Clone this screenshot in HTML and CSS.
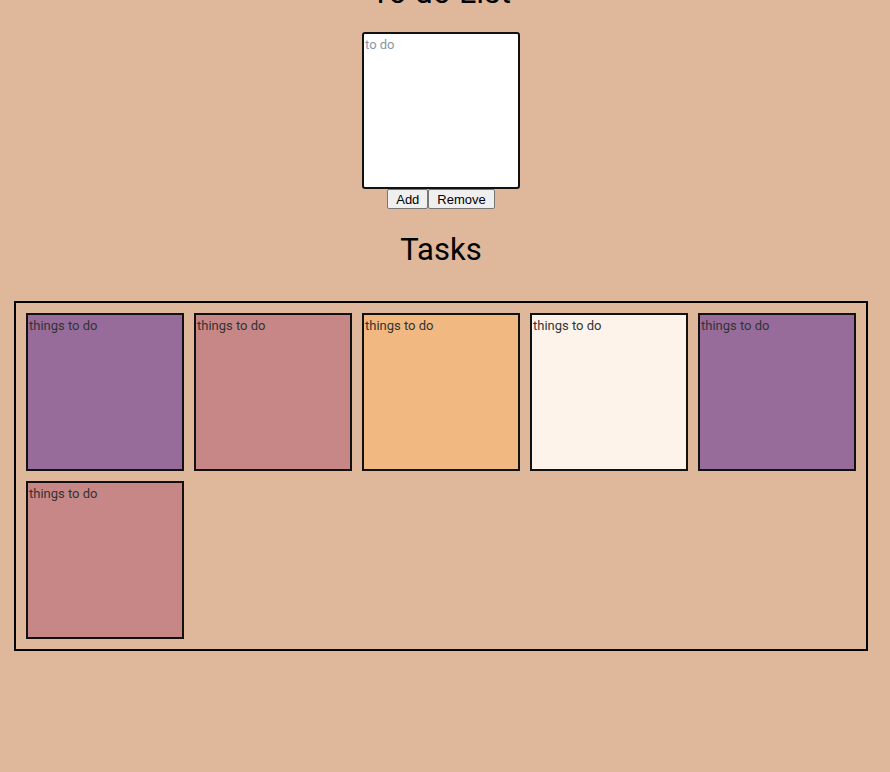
FILE: index.html
```html
<!DOCTYPE html>
<html lang="en">
<head>
    <meta charset="UTF-8">
    <title>To do List</title>
    <link rel="stylesheet" href="styles.css">
</head>
<body>
    <h1 class="title">To do List</h1>
    <div class="entry">
        <textarea class="note-input" placeholder="to do"></textarea>
        <div class="controls">
            <button type="button">Add</button><button type="button">Remove</button>
        </div>
    </div>

    <h2 class="subtitle">Tasks</h2>

    <div class="board">
        <div class="card purple">things to do</div>
        <div class="card rose">things to do</div>
        <div class="card orange">things to do</div>
        <div class="card cream">things to do</div>
        <div class="card purple">things to do</div>
        <div class="card rose">things to do</div>
    </div>
</body>
</html>
```

FILE: styles.css
```css
body { margin: 0; padding-right: 8px; background-color: #dfb89c; font-family: Roboto, "Liberation Sans", sans-serif; }
.title { margin: -26px 0 0; font-size: 32px; font-weight: 400; text-align: center; line-height: 37px; }
.entry { display: flex; flex-direction: column; align-items: center; margin-top: 21px; }
.note-input { width: 152px; height: 150px; margin: 0; padding: 3px 1px 0; border: 2px solid #111; border-radius: 3px; background: white; resize: none; font-family: Roboto, "Liberation Sans", sans-serif; font-size: 13px; outline: none; box-sizing: content-box; display: block; }
.note-input::placeholder { color: #8c96a4; }
.controls { display: flex; }
.controls button { font-family: "Liberation Sans", Arial, sans-serif; font-size: 13px; height: 20px; padding: 0 8px; background: #efefef; border: 1px solid #767676; border-radius: 2px; color: #000; }
.subtitle { margin: 21px 0 0; font-size: 31px; font-weight: 400; text-align: center; line-height: 40px; }
.board { margin: 31px 0 0 14px; width: 830px; padding: 10px; border: 2px solid #000; display: flex; flex-wrap: wrap; gap: 10px; }
.card { width: 158px; height: 158px; border: 2px solid #111; padding: 1px 0 0 1px; box-sizing: border-box; font-size: 13px; color: #333; line-height: 20px; }
.purple { background-color: #976c9b; }
.rose { background-color: #c88787; }
.orange { background-color: #f2b881; }
.cream { background-color: #fdf3eb; }
```
